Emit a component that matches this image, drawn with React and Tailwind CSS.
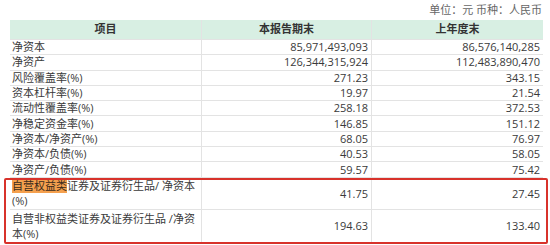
import React from 'react';

const rows = [
    ['净资本', '85,971,493,093', '86,576,140,285'],
    ['净资产', '126,344,315,924', '112,483,890,470'],
    ['风险覆盖率(%)', '271.23', '343.15'],
    ['资本杠杆率(%)', '19.97', '21.54'],
    ['流动性覆盖率(%)', '258.18', '372.53'],
    ['净稳定资金率(%)', '146.85', '151.12'],
    ['净资本/净资产(%)', '68.05', '76.97'],
    ['净资本/负债(%)', '40.53', '58.05'],
    ['净资产/负债(%)', '59.57', '75.42'],
];

const font = { fontFamily: '"Open Sans", "Noto Sans CJK SC", sans-serif' };

const Cell = ({ children, right, last }) => (
    <div
        className={`flex items-center border-b border-[#e3e3e3] ${last ? '' : 'border-r'} ${right ? 'justify-end pr-[3px]' : 'pl-[2px]'}`}
    >
        {children}
    </div>
);

const App = () => (
    <div className="w-[550px] h-[245px] bg-white text-[11px] text-[#3a3a3a] overflow-hidden" style={font}>
        <div className="h-[20px] flex items-center justify-end pr-[8px] text-[#666] text-[11px]">
            单位：元 币种：人民币
        </div>
        <div className="ml-[10px] w-[533px] relative">
            <div className="grid grid-cols-[192px_170px_171px] h-[20px] bg-[#d8efe3] font-bold text-[#333] border-b border-[#e3e3e3]">
                <div className="flex items-center justify-center border-r border-[#e3e3e3]">项目</div>
                <div className="flex items-center justify-center border-r border-[#e3e3e3]">本报告期末</div>
                <div className="flex items-center justify-center">上年度末</div>
            </div>
            {rows.map((r, i) => (
                <div key={i} className="grid grid-cols-[192px_170px_171px] h-[15.3px] leading-[14px]">
                    <Cell>{r[0]}</Cell>
                    <Cell right>{r[1]}</Cell>
                    <Cell right last>{r[2]}</Cell>
                </div>
            ))}
            <div className="grid grid-cols-[192px_170px_171px] h-[32px] leading-[15px]">
                <Cell>
                    <span className="whitespace-nowrap">
                        <span className="bg-[#f4a04e] text-[#3a2a1a]">自营权益类</span>证券及证券衍生品/ 净资本
                        <br />
                        (%)
                    </span>
                </Cell>
                <Cell right>41.75</Cell>
                <Cell right last>27.45</Cell>
            </div>
            <div className="grid grid-cols-[192px_170px_171px] h-[33px] leading-[15px]">
                <Cell>
                    <span className="whitespace-nowrap">
                        自营非权益类证券及证券衍生品 /净资
                        <br />
                        本(%)
                    </span>
                </Cell>
                <Cell right>194.63</Cell>
                <Cell right last>133.40</Cell>
            </div>
            <div className="absolute left-[-6px] right-[-5px] top-[158px] h-[66px] border-2 border-[#d8322b] rounded-[2px] pointer-events-none" />
        </div>
    </div>
);

export default App;
